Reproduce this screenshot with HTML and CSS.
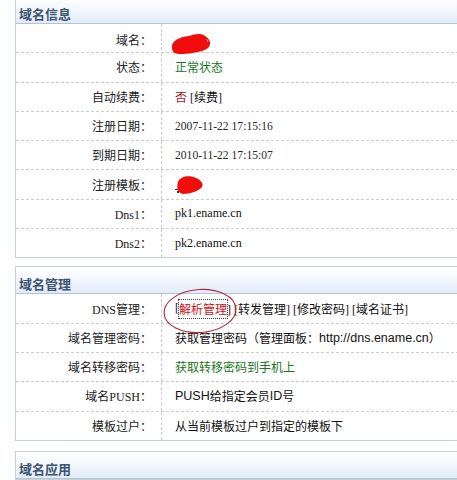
FILE: index.html
```html
<!DOCTYPE html>
<html lang="zh-CN">
<head>
<meta charset="utf-8">
<title>域名信息</title>
<link rel="stylesheet" href="styles.css">
</head>
<body>
<div class="page">
  <section class="panel panel-first">
    <div class="panel-head">域名信息</div>
    <div class="row">
      <div class="label">域名：</div>
      <div class="value">
        <svg class="blob blob-a" width="46" height="22" viewBox="0 0 46 22" aria-hidden="true">
          <path d="M2,15 C1,8 9,4 19,3 C25,1 31,0 35,3 C40,6 42,11 38,15 C33,19 19,21 9,21 C4,21 2,18 2,15 Z" fill="#f20d0d"/>
          <path d="M36,6 C38,6 39,8 37.5,9.5 Z" fill="#8a8a8a"/>
        </svg>
      </div>
    </div>
    <div class="row">
      <div class="label">状态：</div>
      <div class="value green">正常状态</div>
    </div>
    <div class="row">
      <div class="label">自动续费：</div>
      <div class="value"><span class="red">否</span>&nbsp;[续费]</div>
    </div>
    <div class="row">
      <div class="label">注册日期：</div>
      <div class="value date">2007-11-22 17:15:16</div>
    </div>
    <div class="row">
      <div class="label">到期日期：</div>
      <div class="value date">2010-11-22 17:15:07</div>
    </div>
    <div class="row">
      <div class="label">注册模板：</div>
      <div class="value">
        <svg class="blob blob-b" width="32" height="22" viewBox="0 0 32 22" aria-hidden="true">
          <path d="M4,7 C6,1 16,0 22,3 C27,5 30,9 28,12 C25,16 16,19 9,19 C4,18 2,13 4,7 Z" fill="#f20d0d"/>
          <path d="M1,14 L4,14 L4,15 L1,15 Z M3,16 L5,16 L5,18 L3,18 Z" fill="#333"/>
        </svg>
      </div>
    </div>
    <div class="row">
      <div class="label">Dns1：</div>
      <div class="value">pk1.ename.cn</div>
    </div>
    <div class="row">
      <div class="label">Dns2：</div>
      <div class="value">pk2.ename.cn</div>
    </div>
  </section>

  <section class="panel panel-second">
    <div class="panel-head">域名管理</div>
    <div class="row">
      <div class="label">DNS管理：</div>
      <div class="value">[<span class="link-red">解析管理</span>] [转发管理] [修改密码] [域名证书]</div>
    </div>
    <div class="row">
      <div class="label">域名管理密码：</div>
      <div class="value">获取管理密码（管理面板：<span class="sans">http://dns.ename.cn</span>）</div>
    </div>
    <div class="row">
      <div class="label">域名转移密码：</div>
      <div class="value green">获取转移密码到手机上</div>
    </div>
    <div class="row">
      <div class="label">域名PUSH：</div>
      <div class="value"><span class="sans">PUSH</span>给指定会员<span class="sans">ID</span>号</div>
    </div>
    <div class="row">
      <div class="label">模板过户：</div>
      <div class="value">从当前模板过户到指定的模板下</div>
    </div>
  </section>

  <section class="panel panel-third">
    <div class="panel-head">域名应用</div>
  </section>

  <svg class="circle-mark" width="80" height="50" viewBox="0 0 80 50" aria-hidden="true">
    <ellipse cx="40" cy="25" rx="36" ry="21.5" fill="none" stroke="#b3263a" stroke-width="1.1" transform="rotate(-4 40 25)"/>
  </svg>
</div>
</body>
</html>
```

FILE: styles.css
```css
html, body {
  margin: 0;
  padding: 0;
  background: #ffffff;
}

.page {
  position: relative;
  width: 457px;
  height: 480px;
  overflow: hidden;
  padding-left: 15px;
  box-sizing: border-box;
  font-family: "Liberation Serif", "Noto Sans CJK SC", serif;
  font-size: 12px;
  color: #1a1a1a;
}

.panel {
  width: 470px;
  border: 1px solid #c5d0da;
  box-sizing: border-box;
}

.panel-first {
  margin-top: -4px;
}

.panel-second {
  margin-top: 8px;
}

.panel-third {
  margin-top: 10px;
}

.panel-head {
  height: 27px;
  box-sizing: border-box;
  padding: 7px 0 0 3px;
  line-height: 20px;
  font-family: "Noto Sans CJK SC", sans-serif;
  font-size: 13px;
  font-weight: bold;
  color: #3b5472;
  background: linear-gradient(to bottom, #ffffff 0%, #f3f7fd 50%, #e2ecf9 100%);
  border-bottom: 1px solid #b4c3d1;
}

.row {
  display: grid;
  grid-template-columns: 145px 1fr;
  height: 29.3px;
  box-sizing: border-box;
  border-bottom: 1px dashed #cccccc;
}

.row:last-child {
  border-bottom: none;
  height: 28.3px;
}

.label {
  display: flex;
  align-items: center;
  justify-content: flex-end;
  padding-right: 9px;
  color: #222222;
}

.value {
  display: flex;
  align-items: center;
  padding-left: 13px;
  border-left: 1px dashed #cccccc;
  white-space: nowrap;
  color: #111111;
}

.date {
  font-size: 11.6px;
  color: #2a2a2a;
}

.green {
  color: #1a761a;
}

.red {
  color: #a8141c;
}

.link-red {
  color: #cc1111;
  outline: 1px dotted #444444;
  outline-offset: 0;
}

.sans {
  font-family: "Liberation Sans", sans-serif;
  font-size: 12.5px;
}

.blob {
  display: block;
  flex: none;
}

.blob-a {
  margin-left: -5px;
  margin-top: 9px;
}

.blob-b {
  margin-left: -1px;
  margin-top: 2px;
}

.circle-mark {
  position: absolute;
  left: 160px;
  top: 286px;
}
```
